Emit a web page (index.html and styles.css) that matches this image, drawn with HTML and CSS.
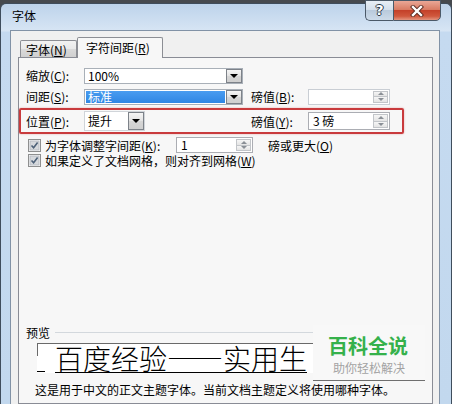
FILE: index.html
```html
<!DOCTYPE html>
<html lang="zh-CN">
<head>
  <meta charset="UTF-8">
  <title>字体</title>
  <link rel="stylesheet" href="styles.css">
</head>
<body>
<div class="window">
  <div class="titlebar">
    <span class="title">字体</span>
    <div class="caption-buttons">
      <span class="btn-help">?</span>
      <span class="btn-close">
        <svg width="14" height="12" viewBox="0 0 14 12">
          <path d="M3 2 L11 10 M11 2 L3 10" stroke="#5a2a20" stroke-width="4.2" stroke-linecap="square"/>
          <path d="M3 2 L11 10 M11 2 L3 10" stroke="#fff" stroke-width="2.4" stroke-linecap="square"/>
        </svg>
      </span>
    </div>
  </div>

  <div class="client">
    <div class="tabs">
      <span class="tab">字体(<u>N</u>)</span>
      <span class="tab active">字符间距(<u>R</u>)</span>
    </div>

    <div class="panel">
      <div class="grid-row">
        <label>缩放(<u>C</u>):</label>
        <div class="combo"><span class="value">100%</span><span class="drop"></span></div>
      </div>

      <div class="grid-row row2">
        <label>间距(<u>S</u>):</label>
        <div class="combo"><span class="value selected">标准</span><span class="drop"></span></div>
        <span></span>
        <label>磅值(<u>B</u>):</label>
        <div class="spin disabled"><span class="value"></span><span class="arrows"><i class="up"></i><i class="down"></i></span></div>
      </div>

      <div class="grid-row highlight">
        <label>位置(<u>P</u>):</label>
        <div class="combo short"><span class="value">提升</span><span class="drop"></span></div>
        <span></span>
        <label>磅值(<u>Y</u>):</label>
        <div class="spin tall"><span class="value">3 磅</span><span class="arrows"><i class="up"></i><i class="down"></i></span></div>
      </div>

      <div class="check-row first">
        <svg class="check" width="13" height="13" viewBox="0 0 13 13">
          <rect x="0.5" y="0.5" width="12" height="12" fill="#fff" stroke="#8e8f8f"/>
          <rect x="2" y="2" width="9" height="9" fill="#d6d9dd" stroke="#b8bcc2"/>
          <path d="M3.5 6.5 L5.6 8.8 L9.6 3.6" fill="none" stroke="#4d6178" stroke-width="1.6"/>
        </svg>
        <span class="check-label kern">为字体调整字间距(<u>K</u>):</span>
        <div class="spin small"><span class="value">1</span><span class="arrows"><i class="up"></i><i class="down"></i></span></div>
        <span class="after">磅或更大(<u>O</u>)</span>
      </div>

      <div class="check-row">
        <svg class="check" width="13" height="13" viewBox="0 0 13 13">
          <rect x="0.5" y="0.5" width="12" height="12" fill="#fff" stroke="#8e8f8f"/>
          <rect x="2" y="2" width="9" height="9" fill="#d6d9dd" stroke="#b8bcc2"/>
          <path d="M3.5 6.5 L5.6 8.8 L9.6 3.6" fill="none" stroke="#4d6178" stroke-width="1.6"/>
        </svg>
        <span class="check-label">如果定义了文档网格，则对齐到网格(<u>W</u>)</span>
      </div>

      <div class="preview-head">
        <span>预览</span>
        <span class="rule"></span>
      </div>
      <div class="preview-box">
        <span class="mark"></span>
        <span class="sample">百度经验——实用生</span>
      </div>
      <p class="desc">这是用于中文的正文主题字体。当前文档主题定义将使用哪种字体。</p>

      <div class="watermark">
        <div class="wm-title">百科全说</div>
        <div class="wm-sub">助你轻松解决</div>
      </div>
    </div>
  </div>
</div>
</body>
</html>
```

FILE: styles.css
```css
* { box-sizing: border-box; }
body { margin: 0; background: #464a4f; font-family: "Noto Sans CJK SC", "Noto Sans", sans-serif; font-size: 12px; color: #000; overflow: hidden; }
u { text-decoration-thickness: 1px; text-underline-offset: 1px; }

.window { margin-top: 3px; width: 452px; height: 401px; border: 1px solid #3f4d5c; border-bottom: none; border-radius: 6px 6px 0 0; padding: 0 11px 0 9px; display: flex; flex-direction: column; background: linear-gradient(#bdd3eb, #d7e5f4 27px, #c5daf0 28px, #c2d8ee); }
.titlebar { height: 26px; display: flex; align-items: flex-start; }
.title { margin: 5px 0 0 2px; line-height: 14px; }
.caption-buttons { margin: -4px -1px 0 auto; display: flex; height: 21px; }
.btn-help { width: 28px; border: 1px solid #4b5968; border-right: none; border-radius: 0 0 0 5px; background: linear-gradient(#e8eef5, #d5e0ec 45%, #b9cadc 50%, #cddbe9); color: #fff; font: bold 14px/19px "DejaVu Sans", sans-serif; text-align: center; text-shadow: 1px 0 0 #2c3a48, -1px 0 0 #2c3a48, 0 1px 0 #2c3a48, 0 -1px 0 #2c3a48; }
.btn-close { width: 48px; border: 1px solid #4b5968; border-radius: 0 0 5px 0; background: linear-gradient(#eaa796, #d97c64 45%, #c4412a 50%, #d0583d 80%, #e39580); display: flex; align-items: center; justify-content: center; }

.client { flex: 1; border: 1px solid #8192a6; border-bottom: none; background: #f0f0f0; padding: 6px 6px 0 7px; display: flex; flex-direction: column; }
.tabs { height: 20px; display: flex; align-items: flex-end; padding-left: 2px; position: relative; z-index: 1; }
.tab { width: 57px; height: 17px; padding: 1px 0 0 5px; line-height: 15px; border: 1px solid #8c8e94; border-bottom: none; border-radius: 2px 2px 0 0; background: linear-gradient(#f2f2f2, #e9e9e9 50%, #dadada 50%, #d0d0d0); }
.tab.active { width: 86px; height: 21px; margin-bottom: -1px; padding: 2px 0 0 8px; background: #f7f7f7; }

.panel { flex: 1; border: 1px solid #898c95; background: #f7f7f7; padding-top: 9px; position: relative; }

.grid-row { display: grid; grid-template-columns: 58px 159px 8px 57px 82px; align-items: center; height: 16px; margin-left: 7px; }
.grid-row.row2 { margin-top: 5px; }
.grid-row.highlight { margin: 4px 0 0 0; width: 385px; height: 26px; padding-left: 5px; border: 2px solid #c93b3d; border-radius: 2px; box-shadow: 0 0 2px rgba(201, 59, 61, 0.45); }

.combo { display: flex; height: 16px; border: 1px solid #a9b0b8; background: #fff; }
.combo.short { width: 61px; height: 20px; border-color: #d0d4d9; }
.combo .value { flex: 1; padding-left: 3px; line-height: 14px; }
.combo.short .value { line-height: 18px; }
.combo .value.selected { margin: 1px 1px 1px 1px; padding-left: 2px; line-height: 12px; color: #fff; background: linear-gradient(#4a9cf0, #2f86e4); }
.drop { width: 16px; border: 1px solid #7d8289; background: linear-gradient(#f5f5f5, #e3e3e3 50%, #d6d6d6 50%, #cfcfcf); display: flex; align-items: center; justify-content: center; }
.drop::after { content: ""; border-left: 4px solid transparent; border-right: 4px solid transparent; border-top: 4px solid #000; }

.spin { display: flex; height: 16px; border: 1px solid #abadb3; background: #fff; }
.spin.tall { height: 18px; }
.spin.disabled { border-color: #c9ced4; }
.spin .value { flex: 1; padding-left: 4px; line-height: 14px; }
.spin.tall .value { line-height: 16px; }
.arrows { width: 15px; margin: 1px 1px 1px 0; display: flex; flex-direction: column; }
.arrows i { flex: 1; border: 1px solid #c2c5c9; background: linear-gradient(#f6f6f6, #e4e4e4); display: flex; align-items: center; justify-content: center; }
.arrows i + i { border-top: none; }
.arrows .up::after { content: ""; border-left: 3px solid transparent; border-right: 3px solid transparent; border-bottom: 3px solid #8a8f96; }
.arrows .down::after { content: ""; border-left: 3px solid transparent; border-right: 3px solid transparent; border-top: 3px solid #8a8f96; }

.check-row { display: flex; align-items: center; height: 15px; margin-left: 9px; }
.check-row.first { height: 16px; margin-top: 3px; }
.check { flex: none; margin-right: 4px; }
.check-label.kern { width: 131px; }
.spin.small { width: 77px; }
.after { margin-left: 15px; }

.preview-head { display: flex; align-items: center; height: 13px; margin: 158px 0 0 7px; }
.preview-head .rule { width: 258px; height: 1px; margin-left: 5px; background: #d3d8dd; }
.preview-box { position: relative; width: 276px; height: 30px; margin: 4px 0 0 18px; border-top: 1px solid #6a6a6a; display: flex; align-items: flex-end; white-space: nowrap; background: #fff; }
.preview-box::before { content: ""; position: absolute; left: 0; top: 0; width: 1px; height: 12px; background: #6a6a6a; }
.mark { flex: none; width: 8px; height: 1px; margin-bottom: 1px; background: #000; }
.sample { margin-left: 10px; font-size: 28px; line-height: 28px; font-weight: 300; border-bottom: 1px solid #000; letter-spacing: 0; }
.desc { margin: 10px 0 0 16px; line-height: 14px; }

.watermark { position: absolute; left: 294px; top: 267px; width: 112px; height: 56px; border-bottom: 1px solid #6f6f6f; background: #f8f8f8; padding: 10px 0 0 15px; }
.wm-title { font-size: 20px; line-height: 22px; font-weight: bold; color: #35b14b; letter-spacing: 0; }
.wm-sub { margin: 4px 0 0 5px; font-size: 12px; line-height: 13px; color: #a3a3a3; }
```
